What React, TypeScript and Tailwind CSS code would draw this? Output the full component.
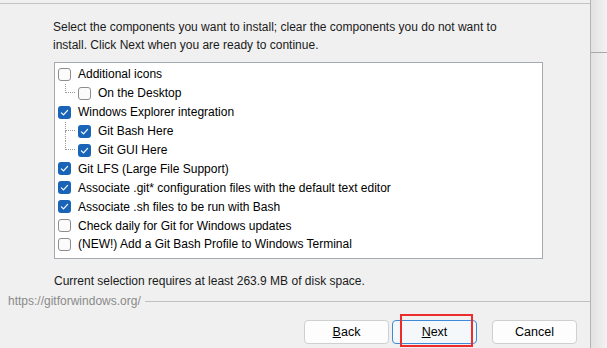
import React from 'react';

type Item = {
  label: string;
  checked: boolean;
  level: 0 | 1;
  last?: boolean;
};

const items: Item[] = [
  { label: 'Additional icons', checked: false, level: 0 },
  { label: 'On the Desktop', checked: false, level: 1, last: true },
  { label: 'Windows Explorer integration', checked: true, level: 0 },
  { label: 'Git Bash Here', checked: true, level: 1 },
  { label: 'Git GUI Here', checked: true, level: 1, last: true },
  { label: 'Git LFS (Large File Support)', checked: true, level: 0 },
  { label: 'Associate .git* configuration files with the default text editor', checked: true, level: 0 },
  { label: 'Associate .sh files to be run with Bash', checked: true, level: 0 },
  { label: 'Check daily for Git for Windows updates', checked: false, level: 0 },
  { label: '(NEW!) Add a Git Bash Profile to Windows Terminal', checked: false, level: 0 },
];

function Box({ checked }: { checked: boolean }) {
  if (checked) {
    return (
      <span className="flex h-[13px] w-[13px] shrink-0 items-center justify-center rounded-[3px] bg-[#1a64b8]">
        <svg width="13" height="13" viewBox="0 0 13 13">
          <path d="M3.4 6.9 L5.5 8.9 L9.6 4.4" fill="none" stroke="#ffffff" strokeWidth="1.2" strokeLinecap="round" strokeLinejoin="round" />
        </svg>
      </span>
    );
  }
  return <span className="h-[13px] w-[13px] shrink-0 rounded-[3px] border border-[#8d8d8d] bg-[#fbfbfb]" />;
}

function Row({ item }: { item: Item }) {
  return (
    <div className="flex h-[18.9px] items-center">
      {item.level === 1 && (
        <div className="flex h-full w-[20px] shrink-0 flex-col pl-[7px]">
          <div className="h-[9px] w-[10px] border-b border-l border-dotted border-[#9a9a9a]" />
          {!item.last && <div className="flex-1 border-l border-dotted border-[#9a9a9a]" />}
        </div>
      )}
      <Box checked={item.checked} />
      <span className="ml-[7px] whitespace-nowrap text-black">{item.label}</span>
    </div>
  );
}

function Btn({ children, primary }: { children: React.ReactNode; primary?: boolean }) {
  return (
    <button
      className={
        'flex h-[24px] w-[85px] items-center justify-center rounded-[4px] border text-[12.5px] text-black ' +
        (primary ? 'border-[#3c8ad8] bg-[#f5f8fb]' : 'border-[#d0d0d0] bg-[#fdfdfd]')
      }
    >
      {children}
    </button>
  );
}

export default function App() {
  return (
    <div className="flex h-[348px] w-[607px] overflow-hidden bg-[#f0f0f0] text-[12px] leading-[18px]" style={{ fontFamily: '"Liberation Sans", Arial, sans-serif' }}>
      <div className="flex w-[591px] shrink-0 flex-col border-r border-[#b4b4b4]">
        <div className="h-[3px]" />
        <div className="flex flex-1 flex-col border-t border-[#c4c4c4]">
          <p className="ml-[53px] mt-[14px] w-[470px] text-[#1a1a1a]">
            Select the components you want to install; clear the components you do not want to install. Click Next when you are ready to continue.
          </p>
          <div className="ml-[54px] mt-[8px] h-[197px] w-[489px] border border-[#a5a9b0] bg-white pl-[3px] pt-[2px]">
            {items.map((it) => (
              <Row key={it.label} item={it} />
            ))}
          </div>
          <p className="ml-[54px] mt-[13px] text-[#1a1a1a]">Current selection requires at least 263.9 MB of disk space.</p>
          <div className="mt-[2px] flex items-center pl-[8px]">
            <span className="text-[#8a8a8a]">https://gitforwindows.org/</span>
            <div className="ml-[4px] flex-1 border-t border-[#c0c0c0]" />
          </div>
          <div className="mt-[10px] flex pl-[304px]">
            <Btn>
              <span><span className="underline">B</span>ack</span>
            </Btn>
            <div className="relative ml-[3px]">
              <Btn primary>
                <span><span className="underline">N</span>ext</span>
              </Btn>
              <div className="absolute left-[8px] top-[-6px] h-[33px] w-[73px] border-2 border-[#ee2b2b]" />
            </div>
            <div className="ml-[15px]">
              <Btn>Cancel</Btn>
            </div>
          </div>
        </div>
      </div>
      <div className="flex-1 bg-gradient-to-r from-[#e2e2e2] to-[#f2f2f2]">
        <div className="mt-[52px] border-t border-[#a8a8a8]" />
      </div>
    </div>
  );
}
